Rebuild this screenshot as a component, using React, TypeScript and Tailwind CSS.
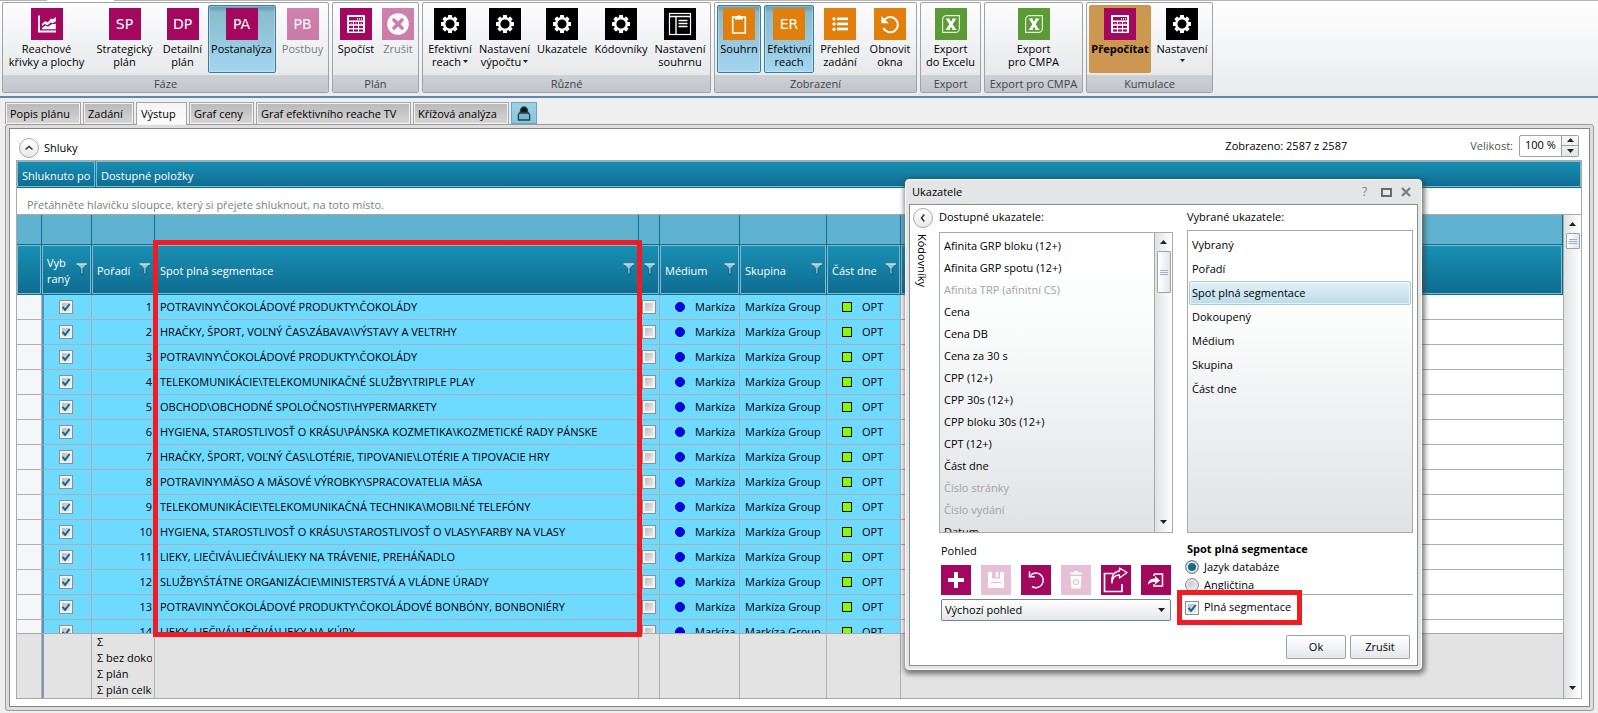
import { useState, type ReactNode } from "react";

const RIBBON_TEXT = "whitespace-pre text-center leading-[13px]";

function Gear() {
  return (
    <svg viewBox="0 0 32 32" className="size-8">
      <g fill="#fff">
        {[0, 45, 90, 135, 180, 225, 270, 315].map((a) => (
          <rect key={a} x="14" y="7" width="4" height="4" rx="0.6" transform={`rotate(${a} 16 16)`} />
        ))}
      </g>
      <circle cx="16" cy="16" r="5.8" fill="none" stroke="#fff" strokeWidth="2.4" />
    </svg>
  );
}

function Calculator() {
  return (
    <svg viewBox="0 0 32 32" className="size-8">
      <rect x="7" y="7" width="18" height="18" rx="1" fill="#fff" />
      <g fill="#a4075e">
        <rect x="9" y="9" width="14" height="3.4" />
        {[14, 17.8, 21.4].map((y) =>
          [9, 14, 19].map((x) => <rect key={`${x}-${y}`} x={x} y={y} width="4" height="2.2" />),
        )}
      </g>
      <g fill="#fff">
        <rect x="17" y="10" width="1" height="1.6" />
        <rect x="19" y="10" width="1" height="1.6" />
        <rect x="21" y="10" width="1" height="1.6" />
        <rect x="10.4" y="14.8" width="1.2" height="0.8" />
        <rect x="15.4" y="14.8" width="1.2" height="0.8" />
        <rect x="20.4" y="14.8" width="1.2" height="0.8" />
      </g>
    </svg>
  );
}

function ReachChart() {
  return (
    <svg viewBox="0 0 32 32" className="size-8">
      <path d="M8 7.5V23.5H25" fill="none" stroke="#fff" strokeWidth="1.8" />
      <path d="M11 16l3-2.8 3 1 3-3.8 2 .8 2.8-2.2v4.4l-3.2 1.8-2-.6-3 2.6-3-1.2L11 18z" fill="#fff" />
      <path d="M11 20l3.4-2.6 2.6 1.4 3.6-2.6 4.2-.4v5.4H11z" fill="#fff" />
    </svg>
  );
}

function CancelCross() {
  return (
    <svg viewBox="0 0 32 32" className="size-8">
      <circle cx="16" cy="16" r="10.8" fill="#fff" />
      <path d="M12 12l8 8M20 12l-8 8" stroke="#a4075e" strokeWidth="3.6" strokeLinecap="round" />
    </svg>
  );
}

function SummaryLayout() {
  return (
    <svg viewBox="0 0 32 32" className="size-8" fill="none" stroke="#fff">
      <rect x="5.5" y="5.5" width="21" height="21" strokeWidth="1.2" />
      <path d="M5.5 8.5h21M12 9v17.5" strokeWidth="1.4" />
      <path d="M14.5 12.5h9M14.5 15.5h9M14.5 18.5h9" strokeWidth="1.3" />
    </svg>
  );
}

function Clipboard() {
  return (
    <svg viewBox="0 0 32 32" className="size-8">
      <path d="M9.7 9h12.6v16H9.7z" fill="none" stroke="#fff" strokeWidth="1.6" />
      <path d="M12 11.5V8.4h2.2a2 2 0 013.6 0H20v3.1z" fill="#fff" />
    </svg>
  );
}

function BulletList() {
  return (
    <svg viewBox="0 0 32 32" className="size-8" fill="#fff">
      {[9.5, 14.6, 19.7].map((y) => (
        <g key={y}>
          <rect x="8.5" y={y} width="3" height="3" rx="1" />
          <rect x="13" y={y} width="11" height="2.6" />
        </g>
      ))}
    </svg>
  );
}

function Restore() {
  return (
    <svg viewBox="0 0 32 32" className="size-8">
      <path d="M10.6 11.6A7.6 7.6 0 1 1 9.4 20" fill="none" stroke="#fff" strokeWidth="2" />
      <path d="M7.4 8v7.2h7.2z" fill="#fff" />
    </svg>
  );
}

function Excel() {
  return (
    <svg viewBox="0 0 32 32" className="size-8">
      <path d="M11.6 7.6h12.8v12.8a4 4 0 0 1-4 4H7.6V11.6a4 4 0 0 1 4-4z" fill="none" stroke="#e3f0d8" strokeWidth="1.2" />
      <path d="M12.6 11l6.8 10.6M19.4 11l-6.8 10.6" stroke="#fff" strokeWidth="2.8" />
      <path d="M10.8 11h4M17.4 11h4M10.8 21.5h4M17.4 21.5h4" stroke="#fff" strokeWidth="1.2" />
    </svg>
  );
}

function Letters({ children }: { children: string }) {
  return (
    <span className="font-['DejaVu_Sans',sans-serif] text-[14px] leading-8 text-white">{children}</span>
  );
}

type Tone = "plum" | "black" | "orange" | "green";
const TONES: Record<Tone, string> = {
  plum: "bg-[#a4075e]",
  black: "bg-black",
  orange: "bg-[#e07f0b]",
  green: "bg-[#5b9a34]",
};

function Caret({ up = false, small = false }: { up?: boolean; small?: boolean }) {
  return (
    <svg viewBox="0 0 8 4" preserveAspectRatio="none" className={small ? "h-[3px] w-[5px]" : "h-[4px] w-[7px]"}>
      <path d={up ? "M0 4L4 0l4 4z" : "M0 0h8L4 4z"} fill="#222" />
    </svg>
  );
}

type RibbonButtonProps = {
  icon: ReactNode;
  tone: Tone;
  lines: string[];
  width: string;
  state?: "active" | "disabled" | "accent";
  caret?: "inline" | "below";
};

function RibbonButton({ icon, tone, lines, width, state, caret }: RibbonButtonProps) {
  const frame =
    state === "active"
      ? "rounded-[2px] border-[#3a7c9c] bg-linear-to-b from-[#5b97b4] via-[#8abccf] via-10% to-[#a3d6ef] inset-ring inset-ring-white/30"
      : state === "accent"
        ? "rounded-[2px] border-[#cc9751] bg-[#cc9751] font-bold"
        : "border-transparent";
  return (
    <button
      type="button"
      disabled={state === "disabled"}
      className={`flex h-[68px] shrink-0 flex-col items-center border pt-[2px] ${width} ${frame} ${state === "disabled" ? "opacity-50" : ""}`}
    >
      <span className={`flex size-8 shrink-0 items-center justify-center ${TONES[tone]}`}>{icon}</span>
      <span className={`${RIBBON_TEXT} pt-[2px]`}>
        {lines.map((line, i) => (
          <span key={line} className="flex items-center justify-center gap-[2px]">
            {line}
            {caret === "inline" && i === lines.length - 1 && <Caret small />}
          </span>
        ))}
        {caret === "below" && (
          <span className="flex justify-center pt-1">
            <Caret small />
          </span>
        )}
      </span>
    </button>
  );
}

function RibbonGroup({ title, width, children }: { title: string; width: string; children: ReactNode }) {
  return (
    <section
      className={`flex h-[91px] shrink-0 flex-col overflow-hidden rounded-[2px] border border-[#a0a2a5] bg-linear-to-b from-[#fdfdfe] to-[#e2e4e7] ${width}`}
    >
      <div className="flex flex-1 justify-center gap-[3px] pt-[2px]">{children}</div>
      <h2 className="h-[17px] bg-linear-to-b from-[#cfd2d5] to-[#c1c4ca] text-center leading-[18px] whitespace-nowrap text-[#3f4348]">
        {title}
      </h2>
    </section>
  );
}

function Ribbon() {
  return (
    <header className="border-b-2 border-[#5f87ad] bg-linear-to-b from-white to-[#e9ebee]">
      <div className="flex h-[2px]">
        <div className="h-px w-[47px] bg-[#b5b5b5]" />
        <div className="w-[67px]" />
        <div className="h-px flex-1 bg-[#b5b5b5]" />
      </div>
      <div className="flex gap-[3px] pb-[3px] pl-[2px]">
        <RibbonGroup title="Fáze" width="w-[327px]">
          <RibbonButton icon={<ReachChart />} tone="plum" lines={["Reachové", "křivky a plochy"]} width="w-[84px]" />
          <RibbonButton icon={<Letters>SP</Letters>} tone="plum" lines={["Strategický", "plán"]} width="w-[66px]" />
          <RibbonButton icon={<Letters>DP</Letters>} tone="plum" lines={["Detailní", "plán"]} width="w-[44px]" />
          <RibbonButton icon={<Letters>PA</Letters>} tone="plum" lines={["Postanalýza"]} width="w-[68px]" state="active" />
          <RibbonButton icon={<Letters>PB</Letters>} tone="plum" lines={["Postbuy"]} width="w-[48px]" state="disabled" />
        </RibbonGroup>
        <RibbonGroup title="Plán" width="w-[87px]">
          <RibbonButton icon={<Calculator />} tone="plum" lines={["Spočíst"]} width="w-[42px]" />
          <RibbonButton icon={<CancelCross />} tone="plum" lines={["Zrušit"]} width="w-[36px]" state="disabled" />
        </RibbonGroup>
        <RibbonGroup title="Různé" width="w-[289px]">
          <RibbonButton icon={<Gear />} tone="black" lines={["Efektivní", "reach"]} width="w-[50px]" caret="inline" />
          <RibbonButton icon={<Gear />} tone="black" lines={["Nastavení", "výpočtu"]} width="w-[53px]" caret="inline" />
          <RibbonButton icon={<Gear />} tone="black" lines={["Ukazatele"]} width="w-[56px]" />
          <RibbonButton icon={<Gear />} tone="black" lines={["Kódovníky"]} width="w-[56px]" />
          <RibbonButton icon={<SummaryLayout />} tone="black" lines={["Nastavení", "souhrnu"]} width="w-[56px]" />
        </RibbonGroup>
        <RibbonGroup title="Zobrazení" width="w-[203px]">
          <RibbonButton icon={<Clipboard />} tone="orange" lines={["Souhrn"]} width="w-[44px]" state="active" />
          <RibbonButton icon={<Letters>ER</Letters>} tone="orange" lines={["Efektivní", "reach"]} width="w-[50px]" state="active" />
          <RibbonButton icon={<BulletList />} tone="orange" lines={["Přehled", "zadání"]} width="w-[46px]" />
          <RibbonButton icon={<Restore />} tone="orange" lines={["Obnovit", "okna"]} width="w-[48px]" />
        </RibbonGroup>
        <RibbonGroup title="Export" width="w-[61px]">
          <RibbonButton icon={<Excel />} tone="green" lines={["Export", "do Excelu"]} width="w-[56px]" />
        </RibbonGroup>
        <RibbonGroup title="Export pro CMPA" width="w-[99px]">
          <RibbonButton icon={<Excel />} tone="green" lines={["Export", "pro CMPA"]} width="w-[94px]" />
        </RibbonGroup>
        <RibbonGroup title="Kumulace" width="w-[127px]">
          <RibbonButton icon={<Calculator />} tone="plum" lines={["Přepočítat"]} width="w-[62px]" state="accent" />
          <RibbonButton icon={<Gear />} tone="black" lines={["Nastavení"]} width="w-[56px]" caret="below" />
        </RibbonGroup>
      </div>
    </header>
  );
}

const TABS: [string, string][] = [
  ["Popis plánu", "w-[76px]"],
  ["Zadání", "w-[51px]"],
  ["Výstup", "w-[51px]"],
  ["Graf ceny", "w-[65px]"],
  ["Graf efektivního reache TV", "w-[155px]"],
  ["Křížová analýza", "w-[96px]"],
];

function TabStrip() {
  return (
    <nav className="flex items-end gap-[2px] pt-[4px] pl-[5px]">
      {TABS.map(([label, width]) => (
        <button
          key={label}
          type="button"
          className={`${width} whitespace-nowrap border px-1 text-left leading-5 ${
            label === "Výstup"
              ? "z-10 -mb-px h-[23px] border-[#a5a5a5] border-b-transparent bg-linear-to-b from-[#f4f4f4] to-[#fcfcfc]"
              : "h-[22px] border-[#a5a5a5] border-b-0 bg-linear-to-b from-[#b9b9b9] to-[#d6d6d6] inset-ring inset-ring-[#f2f2f2]"
          }`}
        >
          {label}
        </button>
      ))}
      <button
        type="button"
        aria-label="Zamknout"
        className="flex h-[22px] w-[26px] items-center justify-center border border-[#64a5bf] bg-linear-to-b from-[#9fd0e2] to-[#86c6dc]"
      >
        <svg viewBox="0 0 14 15" className="h-[15px] w-[14px]">
          <path d="M3.5 6.5V5a3.5 4 0 0 1 7 0v1.5z" fill="#111" stroke="#24404c" strokeWidth="1.4" />
          <path d="M2.4 7h9.200l1 1.500v5.500H1.400V8.500z" fill="#7fb4c8" stroke="#24404c" strokeWidth="1.3" />
        </svg>
      </button>
    </nav>
  );
}

function RoundToggle({ label, direction }: { label: string; direction: "up" | "left" }) {
  return (
    <button
      type="button"
      aria-label={label}
      className="flex size-5 shrink-0 items-center justify-center rounded-full border border-[#a9a9a9] bg-linear-to-b from-white to-[#e6e8ea]"
    >
      <svg viewBox="0 0 10 10" className="size-[10px]">
        <path d={direction === "up" ? "M1.5 6.5L5 3.5l3.500 3" : "M6.3 1.5L3.5 5l2.800 3.500"} fill="none" stroke="#333" strokeWidth="1.5" />
      </svg>
    </button>
  );
}

function PanelHeader() {
  return (
    <div className="flex h-[25px] shrink-0 items-center pr-[3px] pl-[3px]">
      <RoundToggle label="Sbalit shluky" direction="up" />
      <span className="flex-1 pt-[2px] pl-[5px]">Shluky</span>
      <span className="pr-[123px] pb-[3px]">Zobrazeno: 2587 z 2587</span>
      <label htmlFor="size" className="pr-[6px] pb-[3px] text-[#555]">
        Velikost:
      </label>
      <div className="mb-1 flex h-[22px] w-[60px] rounded-[2px] border border-[#a0a0a0] bg-white">
        <input id="size" defaultValue="100 %" className="w-[41px] pl-[5px]" />
        <div className="flex flex-1 flex-col divide-y divide-[#a0a0a0] border-l border-[#a0a0a0] bg-linear-to-b from-[#f8f8f8] to-[#e4e6e8]">
          <button type="button" aria-label="Zvětšit" className="flex flex-1 items-center justify-center">
            <Caret up />
          </button>
          <button type="button" aria-label="Zmenšit" className="flex flex-1 items-center justify-center">
            <Caret />
          </button>
        </div>
      </div>
    </div>
  );
}

const TEAL = "bg-linear-to-b from-[#1990b3] to-[#0e6d91]";

function Funnel() {
  return (
    <svg viewBox="0 0 12 13" className="h-[13px] w-3 shrink-0">
      <path d="M0.5 1h10.500L7 5.500V12L4.700 10V5.500z" fill="#8fc9de" stroke="#0c4d66" strokeWidth="0.8" />
      <path d="M0.5 1h10.500" stroke="#fff" strokeWidth="1.2" />
    </svg>
  );
}

function HeaderCell({ label, filter = true }: { label?: string; filter?: boolean }) {
  return (
    <th className="h-[50px] border-r border-b border-[#0f6f92] p-0 text-left font-normal text-white">
      <div className={`flex h-[49px] items-center border border-[#7fb9cf] pr-[2px] pl-1 ${TEAL}`}>
        <span className="flex-1 pt-[2px] leading-4">{label}</span>
        {filter && <Funnel />}
      </div>
    </th>
  );
}

function CheckBox({ checked = false, label }: { checked?: boolean; label: string }) {
  const [on, setOn] = useState(checked);
  return (
    <span className="grid size-[14px] shrink-0">
      <input
        type="checkbox"
        aria-label={label}
        checked={on}
        onChange={() => setOn(!on)}
        className="col-start-1 row-start-1 size-[14px] appearance-none border border-[#8f8f8f] bg-linear-to-br from-[#aeb3ba] to-[#f5f5f5] inset-ring-2 inset-ring-[#f2f2f2]"
      />
      {on && (
        <svg viewBox="0 0 14 14" className="pointer-events-none col-start-1 row-start-1 size-[14px]">
          <path d="M3.5 6.8l2.600 3L10.600 4" fill="none" stroke="#10688c" strokeWidth="2" />
        </svg>
      )}
    </span>
  );
}

const ROWS = [
  "POTRAVINY\\ČOKOLÁDOVÉ PRODUKTY\\ČOKOLÁDY",
  "HRAČKY, ŠPORT, VOĽNÝ ČAS\\ZÁBAVA\\VÝSTAVY A VEĽTRHY",
  "POTRAVINY\\ČOKOLÁDOVÉ PRODUKTY\\ČOKOLÁDY",
  "TELEKOMUNIKÁCIE\\TELEKOMUNIKAČNÉ SLUŽBY\\TRIPLE PLAY",
  "OBCHOD\\OBCHODNÉ SPOLOČNOSTI\\HYPERMARKETY",
  "HYGIENA, STAROSTLIVOSŤ O KRÁSU\\PÁNSKA KOZMETIKA\\KOZMETICKÉ RADY PÁNSKE",
  "HRAČKY, ŠPORT, VOĽNÝ ČAS\\LOTÉRIE, TIPOVANIE\\LOTÉRIE A TIPOVACIE HRY",
  "POTRAVINY\\MÄSO A MÄSOVÉ VÝROBKY\\SPRACOVATELIA MÄSA",
  "TELEKOMUNIKÁCIE\\TELEKOMUNIKAČNÁ TECHNIKA\\MOBILNÉ TELEFÓNY",
  "HYGIENA, STAROSTLIVOSŤ O KRÁSU\\STAROSTLIVOSŤ O VLASY\\FARBY NA VLASY",
  "LIEKY, LIEČIVÁ\\LIEČIVÁ\\LIEKY NA TRÁVENIE, PREHÁŇADLO",
  "SLUŽBY\\ŠTÁTNE ORGANIZÁCIE\\MINISTERSTVÁ A VLÁDNE ÚRADY",
  "POTRAVINY\\ČOKOLÁDOVÉ PRODUKTY\\ČOKOLÁDOVÉ BONBÓNY, BONBONIÉRY",
  "LIEKY, LIEČIVÁ\\LIEČIVÁ\\LIEKY NA KÚRY",
];

function Columns() {
  return (
    <colgroup>
      <col className="w-[25px]" />
      <col className="w-[50px]" />
      <col className="w-[63px]" />
      <col className="w-[484px]" />
      <col className="w-[21px]" />
      <col className="w-[80px]" />
      <col className="w-[87px]" />
      <col className="w-[74px]" />
      <col />
    </colgroup>
  );
}

const CELL = "h-[25px] whitespace-nowrap border-r border-b border-[#adb0b2] bg-[#6fdaff] py-0";

function DataGrid() {
  return (
    <div className="flex min-h-0 flex-1 flex-col overflow-hidden">
      <div className="min-h-0 flex-1 overflow-hidden">
        <table className="w-full table-fixed border-separate border-spacing-0">
          <Columns />
          <thead>
            <tr>
              {Array.from({ length: 9 }, (_, i) => (
                <td key={i} className="h-[30px] border-r border-b border-[#0f6f92] bg-[#60b3d0] p-0" />
              ))}
            </tr>
            <tr>
              <HeaderCell filter={false} />
              <HeaderCell label="Vyb raný" />
              <HeaderCell label="Pořadí" />
              <HeaderCell label="Spot plná segmentace" />
              <HeaderCell />
              <HeaderCell label="Médium" />
              <HeaderCell label="Skupina" />
              <HeaderCell label="Část dne" />
              <HeaderCell filter={false} />
            </tr>
          </thead>
          <tbody>
            {ROWS.map((text, i) => (
              <tr key={i}>
                <td className="h-[25px] border-r border-b border-[#adb0b2] bg-[#f5f6f8] p-0" />
                <td className={`${CELL} border-l-2 border-l-[#5296bd] pr-1 pl-0`}>
                  <div className="flex justify-center">
                    <CheckBox checked label={`Vybraný, řádek ${i + 1}`} />
                  </div>
                </td>
                <td className={`${CELL} pr-[2px] pl-0 text-right`}>{i + 1}</td>
                <td className={`${CELL} pr-0 pl-[5px]`}>{text}</td>
                <td className={`${CELL} px-0`}>
                  <div className="flex pl-[3px]">
                    <CheckBox label={`Dokoupený, řádek ${i + 1}`} />
                  </div>
                </td>
                <td className={`${CELL} px-0`}>
                  <div className="flex items-center gap-[10px] pl-[15px]">
                    <span className="size-[10px] rounded-full border border-[#00104a] bg-[#0000ff]" />
                    Markíza
                  </div>
                </td>
                <td className={`${CELL} pr-0 pl-[5px]`}>Markíza Group</td>
                <td className={`${CELL} px-0`}>
                  <div className="flex items-center gap-[10px] pl-[15px]">
                    <span className="size-[10px] border border-black bg-[#80ff00]" />
                    OPT
                  </div>
                </td>
                <td className="border-b border-[#adb0b2] bg-white p-0" />
              </tr>
            ))}
          </tbody>
        </table>
      </div>
      <table className="w-full shrink-0 table-fixed border-separate border-spacing-0 border-t border-[#a9a9a9] bg-[#e3e3e3]">
        <Columns />
        <tbody>
          <tr>
            {Array.from({ length: 9 }, (_, i) => (
              <td
                key={i}
                className={`h-[64px] overflow-hidden border-[#adb0b2] py-0 pr-[2px] pl-[5px] align-top whitespace-nowrap ${
                  i < 8 ? "border-r" : ""
                } ${i === 1 ? "border-l-2 border-l-[#7f99b0]" : ""}`}
              >
                {i === 2 && (
                  <div className="overflow-hidden leading-4">
                    {["Σ", "Σ bez dokoupených", "Σ plán", "Σ plán celkem"].map((line) => (
                      <div key={line}>{line}</div>
                    ))}
                  </div>
                )}
              </td>
            ))}
          </tr>
        </tbody>
      </table>
    </div>
  );
}

function ScrollBar({ thumb }: { thumb: string }) {
  return (
    <div className="flex w-[18px] shrink-0 flex-col items-center border-l border-[#a9a9a9] bg-linear-to-r from-[#dfe2e4] to-white">
      <button type="button" aria-label="Nahoru" className="flex h-[18px] w-full items-center justify-center">
        <Caret up />
      </button>
      <div
        className={`flex w-[14px] flex-col items-center justify-center gap-px rounded-[1px] border border-[#a0a4a8] bg-linear-to-r from-white to-[#e3e6ea] ${thumb}`}
      >
        <span className="h-px w-2 bg-[#9fb0c6]" />
        <span className="h-px w-2 bg-[#9fb0c6]" />
        <span className="h-px w-2 bg-[#9fb0c6]" />
      </div>
      <div className="flex-1" />
      <button type="button" aria-label="Dolů" className="flex h-5 w-full items-center justify-center">
        <Caret />
      </button>
    </div>
  );
}

function GridPanel() {
  return (
    <main className="mr-[4px] mb-[2px] ml-[5px] flex min-h-0 flex-1 flex-col rounded-[3px] border border-[#9c9c9c] bg-[#dedede] p-[3px]">
      <div className="flex min-h-0 flex-1 flex-col border border-[#858585] bg-white pt-[6px] pr-[7px] pb-[7px] pl-[6px]">
        <PanelHeader />
        <div className="flex min-h-0 flex-1 flex-col border border-[#a9a9a9]">
          <div className={`flex h-[27px] shrink-0 gap-px border-b border-[#0f6f92] text-white ${TEAL}`}>
            <div className="w-[78px] whitespace-nowrap border border-[#7fb9cf] pl-1 leading-7">Shluknuto po</div>
            <div className="flex-1 border border-[#7fb9cf] pl-1 leading-7">Dostupné položky</div>
          </div>
          <p className="h-[27px] shrink-0 border-b border-[#a9a9a9] pl-[10px] leading-[34px] text-[#808080]">
            Přetáhněte hlavičku sloupce, který si přejete shluknout, na toto místo.
          </p>
          <div className="relative flex min-h-0 flex-1">
            <DataGrid />
            <ScrollBar thumb="h-4" />
            <div className="pointer-events-none absolute top-[25px] bottom-[61px] left-[136px] w-[489px] border-5 border-[#ef1c25]" />
          </div>
        </div>
      </div>
    </main>
  );
}

const AVAILABLE: [string, boolean][] = [
  ["Afinita GRP bloku (12+)", true],
  ["Afinita GRP spotu (12+)", true],
  ["Afinita TRP (afinitní CS)", false],
  ["Cena", true],
  ["Cena DB", true],
  ["Cena za 30 s", true],
  ["CPP (12+)", true],
  ["CPP 30s (12+)", true],
  ["CPP bloku 30s (12+)", true],
  ["CPT (12+)", true],
  ["Část dne", true],
  ["Číslo stránky", false],
  ["Číslo vydání", false],
  ["Datum", true],
];

const SELECTED = ["Vybraný", "Pořadí", "Spot plná segmentace", "Dokoupený", "Médium", "Skupina", "Část dne"];

const LIST = "border border-[#a9a9a9] bg-linear-to-b from-white via-[#fbfcfc] via-30% to-[#e1e2e4]";

const VIEW_ACTIONS: { label: string; enabled: boolean; drawing: ReactNode }[] = [
  { label: "Přidat", enabled: true, drawing: <path d="M15 7v16M7 15h16" strokeWidth="4" /> },
  {
    label: "Uložit",
    enabled: false,
    drawing: (
      <>
        <path d="M7 7h16v16H7z" fill="#fff" stroke="none" />
        <path d="M11 7v6.5h8V7" fill="#e6c1d6" stroke="none" />
        <path d="M16 7v5" strokeWidth="2.5" />
        <path d="M9.5 17.5h11" stroke="#e6c1d6" strokeWidth="1.2" />
      </>
    ),
  },
  {
    label: "Vrátit",
    enabled: true,
    drawing: (
      <>
        <path d="M9.5 10.5A7.3 7.3 0 1 1 11 21.5" strokeWidth="1.5" />
        <path d="M8.500 6.500v5.200h5.200" strokeWidth="1.5" />
      </>
    ),
  },
  {
    label: "Odstranit",
    enabled: false,
    drawing: (
      <>
        <path d="M9.5 11h11l-1 12.500h-9zM9 7.500h12v2H9zM13 6h4v2h-4z" fill="#fff" stroke="none" />
        <circle cx="15" cy="17" r="2.5" stroke="#e6c1d6" strokeWidth="1.2" />
      </>
    ),
  },
  {
    label: "Exportovat",
    enabled: true,
    drawing: (
      <>
        <path d="M12 8.5H3.5v18H21V19" strokeWidth="1.7" />
        <path d="M11 18c.3-5 3-8 7.500-8V13l7.500-5.500L18.500 3v3C13 6.500 10 11 11 18z" strokeWidth="1.3" strokeLinejoin="round" />
      </>
    ),
  },
  {
    label: "Importovat",
    enabled: true,
    drawing: (
      <>
        <path d="M13 9h8.500v12H13v-2M13 9v2" strokeWidth="1.5" />
        <path d="M7 20c0-4.500 3-6.500 7-6.500V11l5 4.500-5 4v-2.500c-3 0-5.500.5-7 3z" fill="#fff" stroke="none" />
      </>
    ),
  },
];

function RadioOption({ label, checked, onSelect }: { label: string; checked: boolean; onSelect: () => void }) {
  return (
    <label className="flex h-[18px] items-center gap-[5px]">
      <input
        type="radio"
        name="language"
        checked={checked}
        onChange={onSelect}
        className="size-[14px] shrink-0 appearance-none rounded-full border border-[#8a8a8a] bg-linear-to-br from-[#b9bdc2] to-[#f6f6f6] inset-ring-2 inset-ring-[#e6e6e6] checked:bg-[#156d8e] checked:bg-none"
      />
      {label}
    </label>
  );
}

function IndicatorsDialog() {
  const [current, setCurrent] = useState("Spot plná segmentace");
  const [language, setLanguage] = useState("Jazyk databáze");
  return (
    <div
      role="dialog"
      aria-label="Ukazatele"
      className="absolute top-[179px] left-[905px] z-20 flex h-[491px] w-[517px] flex-col rounded-[4px] border border-[#fafafa] bg-[#e3e5e7] px-[3px] pb-[3px] shadow-[1px_2px_5px_2px_rgba(60,60,60,0.65)]"
    >
      <div className="flex h-[24px] shrink-0 items-center pr-[7px] pl-[3px]">
        <h2 className="flex-1">Ukazatele</h2>
        <button type="button" aria-label="Nápověda" className="w-[19px] text-left text-[12px] text-[#7c7f82]">
          ?
        </button>
        <button type="button" aria-label="Maximalizovat" className="w-[20px]">
          <svg viewBox="0 0 11 9" className="h-[9px] w-[11px]">
            <rect x="1" y="1" width="9" height="7" fill="#e8e8e8" stroke="#666a70" strokeWidth="2" />
          </svg>
        </button>
        <button type="button" aria-label="Zavřít">
          <svg viewBox="0 0 10 10" className="size-[10px]">
            <path d="M1 1l8 8M9 1L1 9" stroke="#777b80" strokeWidth="2.2" />
          </svg>
        </button>
      </div>
      <div className="flex min-h-0 flex-1 border border-[#8d8d8d] bg-white">
        <div className="flex w-[29px] shrink-0 flex-col items-start gap-[6px] pt-[3px] pl-[3px]">
          <RoundToggle label="Zobrazit kódovníky" direction="left" />
          <span className="w-[18px] leading-[18px] [writing-mode:vertical-rl]">Kódovníky</span>
        </div>
        <div className="flex w-[234px] shrink-0 flex-col">
          <h3 className="h-[27px] leading-6">Dostupné ukazatele:</h3>
          <div className={`flex h-[301px] ${LIST}`}>
            <ul className="min-w-0 flex-1 overflow-hidden pt-[2px] pl-1">
              {AVAILABLE.map(([name, enabled]) => (
                <li key={name} className={`h-[22px] leading-[22px] ${enabled ? "" : "text-[#a3a3a3]"}`}>
                  {name}
                </li>
              ))}
            </ul>
            <ScrollBar thumb="h-[42px]" />
          </div>
          <h3 className="pt-[10px] pl-[2px] leading-4">Pohled</h3>
          <div className="flex gap-[10px] pt-[6px] pl-[2px]">
            {VIEW_ACTIONS.map(({ label, enabled, drawing }) => (
              <button
                key={label}
                type="button"
                aria-label={label}
                disabled={!enabled}
                className={`size-[30px] ${enabled ? "bg-[#a4075e]" : "bg-[#e6c1d6]"}`}
              >
                <svg viewBox="0 0 30 30" className="size-[30px]" fill="none" stroke="#fff">
                  {drawing}
                </svg>
              </button>
            ))}
          </div>
          <div className="grid items-center pt-1 pr-[2px] pl-[2px]">
            <select
              aria-label="Pohled"
              className="col-start-1 row-start-1 h-[22px] appearance-none rounded-[2px] border border-[#6d8798] bg-linear-to-b from-white to-[#e4e7e9] pl-[3px]"
            >
              <option>Výchozí pohled</option>
            </select>
            <span className="pointer-events-none col-start-1 row-start-1 flex justify-end pr-[6px]">
              <Caret />
            </span>
          </div>
        </div>
        <div className="ml-[14px] flex w-[226px] flex-col">
          <h3 className="h-[25px] leading-6">Vybrané ukazatele:</h3>
          <ul className={`h-[303px] p-px pt-[2px] ${LIST}`}>
            {SELECTED.map((name) => (
              <li key={name}>
                <button
                  type="button"
                  onClick={() => setCurrent(name)}
                  className={`h-6 w-full rounded-[2px] border px-[2px] text-left leading-[22px] ${
                    name === current
                      ? "border-[#a5cddc] bg-linear-to-b from-[#e2f1f7] to-[#bcdce8] inset-ring inset-ring-white/60"
                      : "border-transparent"
                  }`}
                >
                  {name}
                </button>
              </li>
            ))}
          </ul>
          <h3 className="pt-[8px] leading-4 font-bold">Spot plná segmentace</h3>
          <div className="-ml-[2px] h-[38px] overflow-hidden border-b border-[#a9a9a9] pt-px">
            {["Jazyk databáze", "Angličtina"].map((name) => (
              <RadioOption key={name} label={name} checked={language === name} onSelect={() => setLanguage(name)} />
            ))}
          </div>
          <div className="relative -ml-[2px] flex h-[25px] items-center gap-[5px]">
            <CheckBox checked label="Plná segmentace" />
            Plná segmentace
            <div className="pointer-events-none absolute -top-[5px] -left-[8px] h-[35px] w-[125px] border-5 border-[#ef1c25]" />
          </div>
          <div className="flex justify-end gap-1 pt-[15px] pr-[3px]">
            {["Ok", "Zrušit"].map((name) => (
              <button
                key={name}
                type="button"
                className="h-6 w-[60px] rounded-[2px] border border-[#a0a0a0] bg-linear-to-b from-white to-[#e4e8ea]"
              >
                {name}
              </button>
            ))}
          </div>
        </div>
      </div>
    </div>
  );
}

export default function App() {
  return (
    <div className="relative flex h-screen min-h-[700px] flex-col overflow-hidden bg-[#efefef] font-['Open_Sans',sans-serif] text-[11px] text-black">
      <Ribbon />
      <TabStrip />
      <GridPanel />
      <IndicatorsDialog />
    </div>
  );
}
